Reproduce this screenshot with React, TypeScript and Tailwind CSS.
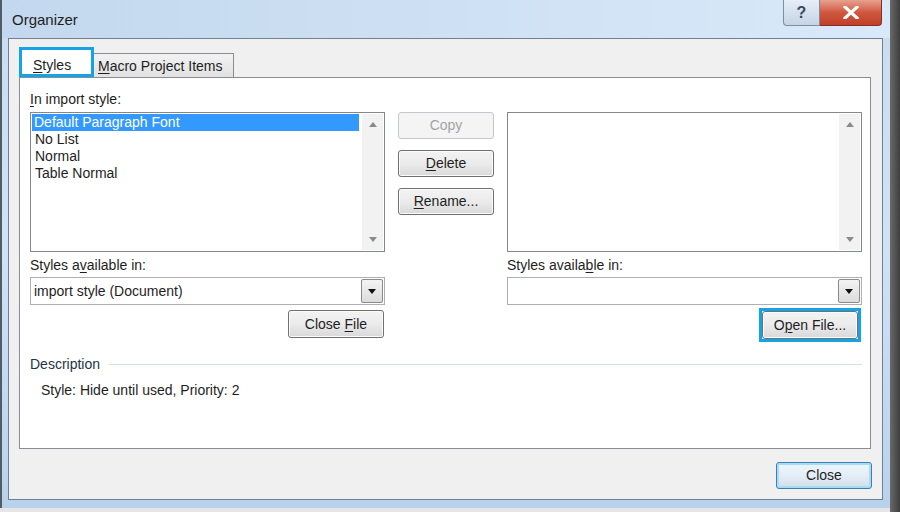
import React from "react";

function U({ c }: { c: string }) {
  return <span className="underline underline-offset-[2px] decoration-1">{c}</span>;
}

function Arrow({ dir, color = "#7a7a7a" }: { dir: "up" | "down"; color?: string }) {
  return (
    <svg width="8" height="5" viewBox="0 0 8 5">
      {dir === "up" ? (
        <path d="M0 5 L4 0 L8 5 Z" fill={color} />
      ) : (
        <path d="M0 0 L8 0 L4 5 Z" fill={color} />
      )}
    </svg>
  );
}

function ScrollBar() {
  return (
    <div className="w-[21px] my-[1px] mr-[1px] bg-[#f2f2f2] flex flex-col items-center justify-between py-[8px]">
      <Arrow dir="up" color="#8a8a8a" />
      <Arrow dir="down" color="#8a8a8a" />
    </div>
  );
}

function Btn({
  children,
  disabled,
  className = "",
}: {
  children: React.ReactNode;
  disabled?: boolean;
  className?: string;
}) {
  return (
    <div
      className={
        disabled
          ? "h-[27px] w-[96px] rounded-[3px] border border-[#c4c8cc] bg-[#f4f4f4] flex items-center justify-center text-[14px] text-[#a3a3a3] " + className
          : "h-[27px] w-[96px] rounded-[3px] border border-[#707070] bg-gradient-to-b from-[#f3f3f3] via-[#ebebeb] to-[#d9d9d9] shadow-[inset_0_0_0_1px_#fbfbfb] flex items-center justify-center text-[14px] text-[#1e1e1e] " + className
      }
    >
      <span>{children}</span>
    </div>
  );
}

function Combo({ value }: { value?: string }) {
  return (
    <div className="h-[28px] w-full border border-[#acb0b5] bg-white flex items-stretch">
      <div className="flex-1 flex items-center pl-[3px] text-[14px] text-[#1e1e1e]">{value}</div>
      <div className="w-[22px] my-[1px] mr-[1px] border border-[#8a8a8a] rounded-[2px] bg-gradient-to-b from-[#f4f4f4] to-[#dcdcdc] flex items-center justify-center">
        <Arrow dir="down" color="#111" />
      </div>
    </div>
  );
}

export default function App() {
  return (
    <div className="w-[900px] h-[512px] bg-[#e6e6e6] flex font-['Liberation_Sans',Arial,sans-serif] overflow-hidden">
      <div className="w-[890px] h-[508px] flex flex-col border-l-[2px] border-[#525c66] rounded-tr-[6px] bg-gradient-to-b from-[#c9dcf0] via-[#cfe2f6] to-[#b9d2ec]">
        {/* title bar */}
        <div className="h-[38px] flex items-start justify-between bg-gradient-to-r from-[#c3d8ee] to-[#d9e9f9] rounded-tr-[6px]">
          <div className="pl-[10px] pt-[10px] text-[15px] text-[#1e1e1e] leading-[20px]">Organizer</div>
          <div className="flex mr-[8px]">
            <div className="w-[37px] h-[26px] rounded-bl-[4px] border border-t-0 border-[#7d8ea3] bg-gradient-to-b from-[#e6eef7] to-[#c5d4e5] flex items-center justify-center text-[16px] font-bold text-[#3a4a5e]">
              ?
            </div>
            <div className="w-[62px] h-[26px] rounded-br-[4px] border border-l-0 border-t-0 border-[#8a2b1d] bg-gradient-to-b from-[#e7a090] via-[#d0563e] to-[#c0402a] flex items-center justify-center">
              <svg width="16" height="13" viewBox="0 0 16 13">
                <path d="M2 1 L14 12 M14 1 L2 12" stroke="#ffffff" strokeWidth="3.2" strokeLinecap="square" />
              </svg>
            </div>
          </div>
        </div>

        {/* client */}
        <div className="flex-1 ml-[6px] mr-[7px] mb-[8px] border border-[#6f8093] bg-[#f0f0f0] pt-[8px] pl-[10px] pr-[10px] flex flex-col">
          {/* tabs */}
          <div className="h-[30px] flex items-end">
            <div className="w-[75px] h-[30px] border-[3px] border-[#16a3e6] bg-white flex items-center pl-[11px] pt-[6px] text-[14px] text-[#1e1e1e]">
              <span>
                <U c="S" />tyles
              </span>
            </div>
            <div className="w-[140px] h-[24px] border border-l-0 border-b-0 border-[#898c95] bg-gradient-to-b from-[#f3f3f3] to-[#e1e1e1] flex items-center pl-[4px] pt-[1px] text-[14px] text-[#1e1e1e]">
              <span>
                <U c="M" />acro Project Items
              </span>
            </div>
          </div>

          {/* panel */}
          <div className="w-[852px] h-[372px] border border-[#898c95] bg-white pl-[10px] pr-[8px] pt-[12px] flex flex-col text-[#1e1e1e]">
            <div className="flex gap-[13px]">
              {/* left column */}
              <div className="w-[355px] flex flex-col">
                <div className="h-[18px] leading-[18px] text-[14px] mb-[4px]">
                  <U c="I" />n import style:
                </div>
                <div className="h-[140px] border border-[#828790] flex">
                  <div className="flex-1 pt-[1px] pl-[1px] pr-[3px] text-[14px]">
                    <div className="h-[17px] leading-[17px] bg-[#3399ff] text-white pl-[2px]">Default Paragraph Font</div>
                    <div className="h-[17px] leading-[17px] pl-[3px]">No List</div>
                    <div className="h-[17px] leading-[17px] pl-[3px]">Normal</div>
                    <div className="h-[17px] leading-[17px] pl-[3px]">Table Normal</div>
                  </div>
                  <ScrollBar />
                </div>
                <div className="h-[18px] leading-[18px] text-[14px] mt-[4px] mb-[3px]">
                  Styles a<U c="v" />ailable in:
                </div>
                <Combo value="import style (Document)" />
                <div className="flex justify-end mt-[5px] pr-[1px]">
                  <Btn className="h-[28px]">
                    Close <U c="F" />ile
                  </Btn>
                </div>
              </div>

              {/* middle column */}
              <div className="w-[96px] pt-[22px] flex flex-col gap-[11px]">
                <Btn disabled>Copy</Btn>
                <Btn>
                  <U c="D" />elete
                </Btn>
                <Btn>
                  <U c="R" />ename...
                </Btn>
              </div>

              {/* right column */}
              <div className="w-[355px] flex flex-col">
                <div className="h-[18px] mb-[4px]" />
                <div className="h-[140px] border border-[#828790] flex">
                  <div className="flex-1" />
                  <ScrollBar />
                </div>
                <div className="h-[18px] leading-[18px] text-[14px] mt-[4px] mb-[3px]">
                  Styles availa<U c="b" />le in:
                </div>
                <Combo />
                <div className="flex justify-end mt-[3px] pr-[1px]">
                  <div className="border-[3px] border-[#16a3e6]">
                    <Btn className="w-[90px] h-[28px]">
                      O<U c="p" />en File...
                    </Btn>
                  </div>
                </div>
              </div>
            </div>

            <div className="mt-[13px] h-[18px] flex items-center">
              <span className="text-[14px] text-[#243447]">Description</span>
              <div className="flex-1 h-px bg-[#d5dee6] ml-[9px]" />
            </div>
            <div className="mt-[8px] pl-[11px] h-[18px] leading-[18px] text-[14px] text-[#1e1e1e]">
              Style: Hide until used, Priority: 2
            </div>
          </div>

          <div className="flex justify-end mt-[13px]">
            <div className="w-[96px] h-[27px] rounded-[3px] border border-[#3c7fb1] bg-gradient-to-b from-[#eef6fc] via-[#e4eef7] to-[#d2dde8] shadow-[inset_0_0_0_2px_#a6dcf6] flex items-center justify-center text-[14px] text-[#1e1e1e]">
              Close
            </div>
          </div>
        </div>
      </div>
      <div className="w-[10px] h-[512px] bg-gradient-to-r from-[#6a6a6a] to-[#3e3e3e]" />
    </div>
  );
}
